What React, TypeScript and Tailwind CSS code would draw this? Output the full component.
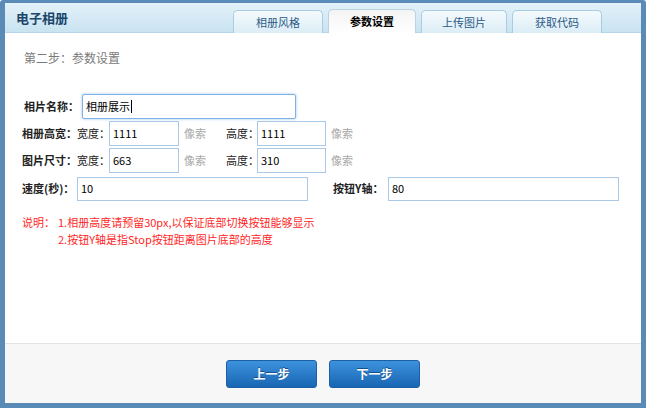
import React from 'react';

const font = { fontFamily: '"Noto Sans CJK SC", "Liberation Sans", sans-serif' };

const tabs = [
  { label: '相册风格', width: 'w-[90px]', active: false },
  { label: '参数设置', width: 'w-[88px]', active: true },
  { label: '上传图片', width: 'w-[86px]', active: false },
  { label: '获取代码', width: 'w-[90px]', active: false },
];

const Field: React.FC<{ value: string; className: string; focus?: boolean }> = ({ value, className, focus }) => (
  <div
    className={`flex shrink-0 items-center border bg-white pl-[3px] text-[11px] text-black ${
      focus
        ? 'rounded-[2px] border-[#7fb2e3] shadow-[0_0_3px_#9cc7ee]'
        : 'border-[#a9c9e6]'
    } ${className}`}
  >
    {value}
    {focus && <span className="ml-[1px] h-[13px] w-px bg-black" />}
  </div>
);

const Unit = () => (
  <span className="ml-[5px] w-[42px] shrink-0 whitespace-nowrap text-[11px] text-[#a8a8a8]">像索</span>
);

const Label: React.FC<{ text: string; className: string; bold?: boolean }> = ({ text, className, bold }) => (
  <span
    className={`shrink-0 whitespace-nowrap text-[#222] ${bold ? 'font-bold' : ''} ${className}`}
  >
    {text}
  </span>
);

export default function App() {
  return (
    <div className="h-[411px] w-[650px] bg-white" style={font}>
      <div className="flex h-[408px] w-[646px] flex-col rounded-t-[3px] border-x-[5px] border-b-[5px] border-t-[3px] border-[#5a8bb7]">
        {/* header */}
        <div className="flex h-[30px] items-end justify-between border-b border-[#b5d6ea] bg-gradient-to-b from-[#e3f1f9] to-[#c9e3f1] pr-[39px]">
          <div className="self-center pl-[11px] text-[13px] font-bold text-[#1b466b]">电子相册</div>
          <div className="-mb-px flex items-end gap-[5px]">
            {tabs.map((t) => (
              <div
                key={t.label}
                className={`flex h-[23px] items-center justify-center rounded-t-[5px] border border-b-0 text-[11px] ${t.width} ${
                  t.active
                    ? 'h-[24px] border-[#b9d3e2] bg-gradient-to-b from-[#f4f4f4] to-white font-bold text-black'
                    : 'border-[#a8cde3] bg-gradient-to-b from-[#f4fafd] to-[#dcedf6] text-[#2a5a86]'
                }`}
              >
                {t.label}
              </div>
            ))}
          </div>
        </div>

        {/* content */}
        <div className="flex h-[310px] flex-col bg-white">
          <div className="pl-[19px] pt-[16px] text-[12px] text-[#7a7a7a]">第二步：参数设置</div>

          <div className="mt-[27px] flex flex-col gap-[2px] text-[11px]">
            <div className="flex h-[25px] items-center pl-[19px]">
              <Label text="相片名称：" className="w-[58px]" bold />
              <Field value="相册展示" className="h-[25px] w-[214px]" focus />
            </div>
            <div className="flex h-[25px] items-center pl-[17px]">
              <Label text="相册高宽：" className="w-[55px]" bold />
              <Label text="宽度：" className="w-[32px]" />
              <Field value="1111" className="h-[25px] w-[70px]" />
              <Unit />
              <Label text="高度：" className="w-[31px]" />
              <Field value="1111" className="h-[25px] w-[69px]" />
              <Unit />
            </div>
            <div className="flex h-[25px] items-center pl-[17px]">
              <Label text="图片尺寸：" className="w-[55px]" bold />
              <Label text="宽度：" className="w-[32px]" />
              <Field value="663" className="h-[25px] w-[70px]" />
              <Unit />
              <Label text="高度：" className="w-[31px]" />
              <Field value="310" className="h-[25px] w-[69px]" />
              <Unit />
            </div>
            <div className="mt-[1px] flex h-[25px] items-center pl-[17px]">
              <Label text="速度(秒)：" className="w-[55px]" bold />
              <Field value="10" className="h-[24px] w-[231px]" />
              <Label text="按钮Y轴：" className="ml-[25px] w-[55px]" bold />
              <Field value="80" className="h-[24px] w-[231px]" />
            </div>
          </div>

          <div className="mt-[13px] flex pl-[17px] text-[11px] leading-[17px] text-[#ff1f1f]">
            <span className="w-[36px] shrink-0">说明：</span>
            <div>
              <div>1.相册高度请预留30px,以保证底部切换按钮能够显示</div>
              <div>2.按钮Y轴是指Stop按钮距离图片底部的高度</div>
            </div>
          </div>
        </div>

        {/* footer */}
        <div className="flex flex-1 items-center justify-center gap-[12px] border-t border-[#e3e3e3] bg-[#f7f7f7]">
          <button className="h-[28px] w-[91px] rounded-[3px] border border-[#1c5fa6] bg-gradient-to-b from-[#3d92dd] to-[#1766b3] text-[12px] font-bold text-white [text-shadow:0_-1px_0_#154f8c]">
            上一步
          </button>
          <button className="h-[28px] w-[91px] rounded-[3px] border border-[#1c5fa6] bg-gradient-to-b from-[#3d92dd] to-[#1766b3] text-[12px] font-bold text-white [text-shadow:0_-1px_0_#154f8c]">
            下一步
          </button>
        </div>
      </div>
    </div>
  );
}
